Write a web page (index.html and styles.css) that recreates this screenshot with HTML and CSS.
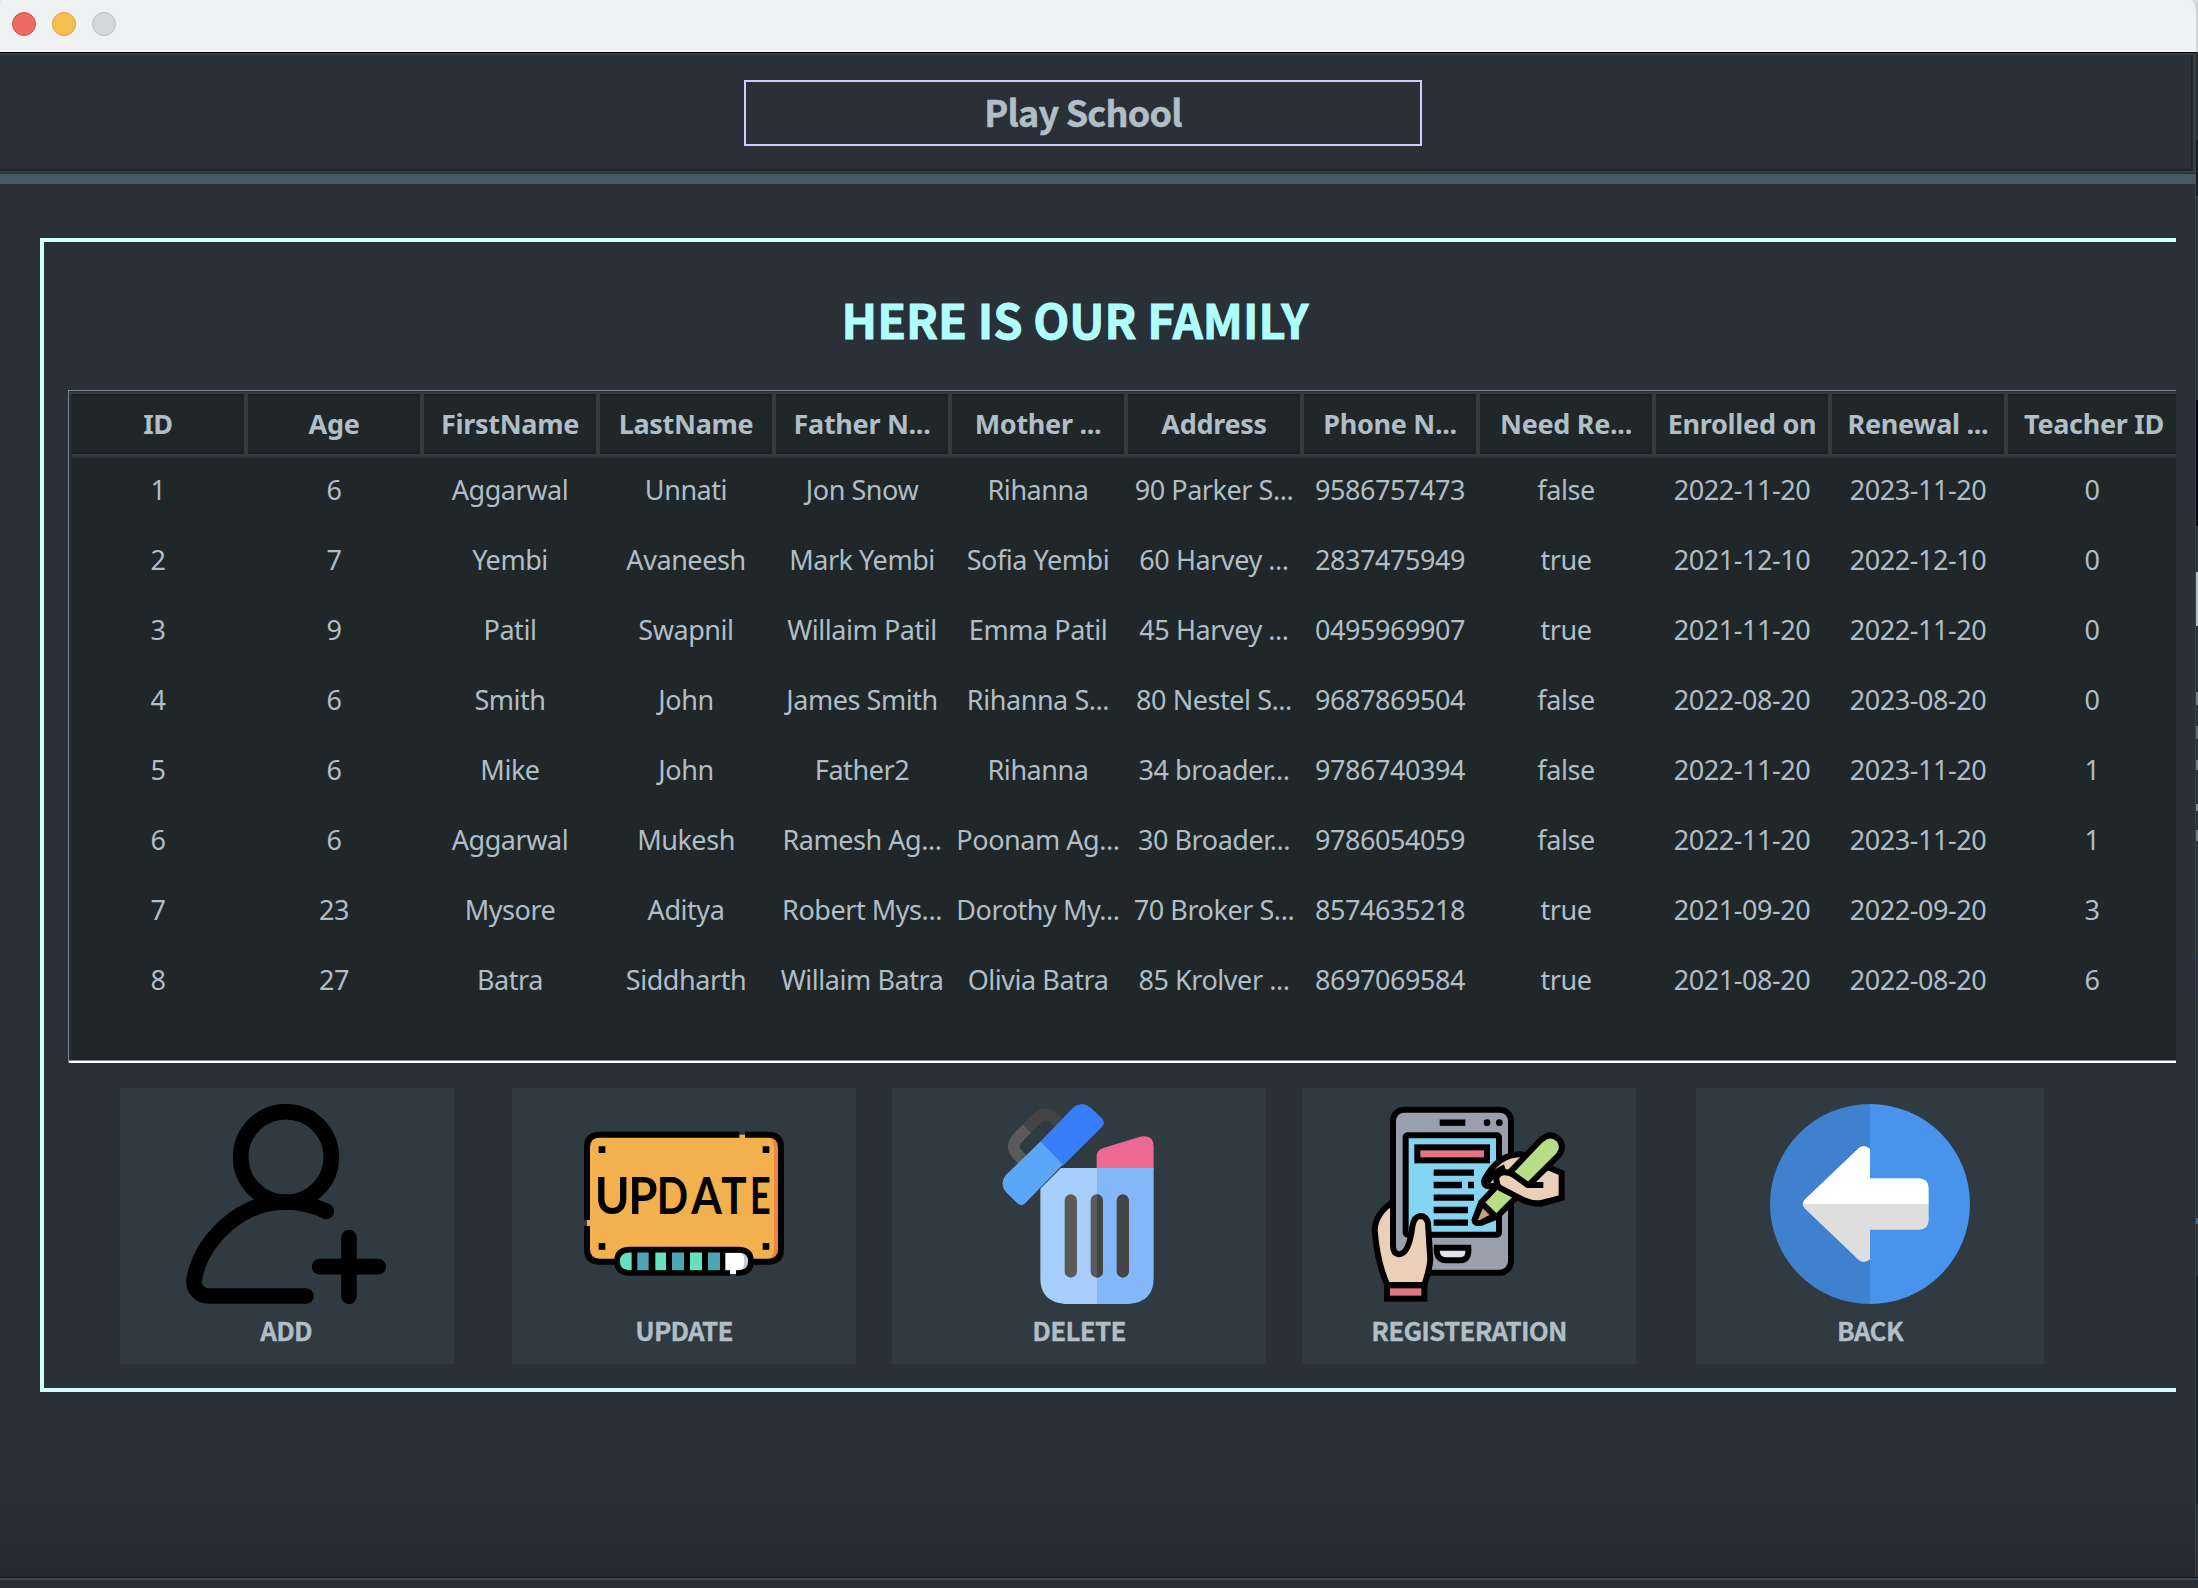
FILE: index.html
```
<!DOCTYPE html>
<html lang="en">
<head>
<meta charset="utf-8">
<title>Play School</title>
<link rel="stylesheet" href="styles.css">
</head>
<body>
<div class="desktop">
  <div class="window">
    <div class="titlebar">
      <span class="light close"></span><span class="light minimize"></span><span class="light zoom"></span>
    </div>
    <header class="header"><div class="brand">Play School</div></header>
    <div class="divider"></div>
    <main class="content">
      <section class="panel">
        <h1 class="heading">HERE IS OUR FAMILY</h1>
        <div class="table-box">
          <div class="table">
            <div class="row head"><span>ID</span><span>Age</span><span>FirstName</span><span>LastName</span><span>Father N...</span><span>Mother ...</span><span>Address</span><span>Phone N...</span><span>Need Re...</span><span>Enrolled on</span><span>Renewal ...</span><span>Teacher ID</span></div>
            <div class="rule"></div>
            <div class="row"><span>1</span><span>6</span><span>Aggarwal</span><span>Unnati</span><span>Jon Snow</span><span>Rihanna</span><span>90 Parker S...</span><span>9586757473</span><span>false</span><span>2022-11-20</span><span>2023-11-20</span><span>0</span></div>
            <div class="row"><span>2</span><span>7</span><span>Yembi</span><span>Avaneesh</span><span>Mark Yembi</span><span>Sofia Yembi</span><span>60 Harvey ...</span><span>2837475949</span><span>true</span><span>2021-12-10</span><span>2022-12-10</span><span>0</span></div>
            <div class="row"><span>3</span><span>9</span><span>Patil</span><span>Swapnil</span><span>Willaim Patil</span><span>Emma Patil</span><span>45 Harvey ...</span><span>0495969907</span><span>true</span><span>2021-11-20</span><span>2022-11-20</span><span>0</span></div>
            <div class="row"><span>4</span><span>6</span><span>Smith</span><span>John</span><span>James Smith</span><span>Rihanna S...</span><span>80 Nestel S...</span><span>9687869504</span><span>false</span><span>2022-08-20</span><span>2023-08-20</span><span>0</span></div>
            <div class="row"><span>5</span><span>6</span><span>Mike</span><span>John</span><span>Father2</span><span>Rihanna</span><span>34 broader...</span><span>9786740394</span><span>false</span><span>2022-11-20</span><span>2023-11-20</span><span>1</span></div>
            <div class="row"><span>6</span><span>6</span><span>Aggarwal</span><span>Mukesh</span><span>Ramesh Ag...</span><span>Poonam Ag...</span><span>30 Broader...</span><span>9786054059</span><span>false</span><span>2022-11-20</span><span>2023-11-20</span><span>1</span></div>
            <div class="row"><span>7</span><span>23</span><span>Mysore</span><span>Aditya</span><span>Robert Mys...</span><span>Dorothy My...</span><span>70 Broker S...</span><span>8574635218</span><span>true</span><span>2021-09-20</span><span>2022-09-20</span><span>3</span></div>
            <div class="row"><span>8</span><span>27</span><span>Batra</span><span>Siddharth</span><span>Willaim Batra</span><span>Olivia Batra</span><span>85 Krolver ...</span><span>8697069584</span><span>true</span><span>2021-08-20</span><span>2022-08-20</span><span>6</span></div>
          </div>
        </div>
        <div class="actions">
          <div class="card add">
            <svg class="icon" viewBox="258 102 600 600" fill="none" stroke="#000" stroke-width="47" stroke-linecap="round" stroke-linejoin="round">
              <circle cx="558" cy="261" r="136"/>
              <path d="M679 424C640 405 600 396 555 396C425 396 305 505 282 630C279 656 300 678 325 678H618M747 503V679M659 590H835"/>
            </svg>
            <span>ADD</span>
          </div>
          <div class="card update">
            <svg class="icon" viewBox="252 102 600 600">
              <rect x="261" y="194" width="582" height="381" rx="38" fill="#f2b04f"/>
              <path d="M808 200Q836 210 836 235V535Q836 560 808 572Q822 555 822 535V235Q822 210 808 200Z" fill="#ee8441"/>
              <path d="M718 194H299Q261 194 261 232V450M261 468V537Q261 575 299 575H805Q843 575 843 537V232Q843 194 805 194H735" fill="none" stroke="#000" stroke-width="18"/>
              <path d="M296 229h20v20h-20zM788 229h20v20h-20zM296 519h20v20h-20zM788 519h20v20h-20z"/>
              <g class="icon-text">
                <text x="284" y="433" textLength="105" lengthAdjust="spacingAndGlyphs">U</text>
                <text x="385" y="433" textLength="88" lengthAdjust="spacingAndGlyphs">P</text>
                <text x="470" y="433" textLength="94" lengthAdjust="spacingAndGlyphs">D</text>
                <text x="574" y="433" textLength="92" lengthAdjust="spacingAndGlyphs">A</text>
                <text x="664" y="433" textLength="76" lengthAdjust="spacingAndGlyphs">T</text>
                <text x="750" y="433" textLength="62" lengthAdjust="spacingAndGlyphs">E</text>
              </g>
              <rect x="351" y="539" width="402" height="70" rx="35" fill="#000"/>
              <path d="M395 546V602H386Q357 600 357 574T386 546Z M466 546h32v56h-32z M570 546h36v56h-36z" fill="#66e0bd"/>
              <path d="M412 546h34v56h-34z M516 546h36v56h-36z M624 546h36v56h-36z" fill="#4ba5b3"/>
              <path d="M676 548H718Q747 550 747 574T718 602H708V612H690V602H676Z" fill="#fff"/>
              <path d="M725 548Q748 555 748 574T725 602Q733 590 733 574T725 548Z" fill="#bdced9"/>
              <path d="M690 609H386Q351 607 351 574T386 539H718Q753 541 753 574T718 609H708" fill="none" stroke="#000" stroke-width="17"/>
            </svg>
            <span>UPDATE</span>
          </div>
          <div class="card delete">
            <svg class="icon" viewBox="297 102 600 600">
              <path d="M428 270L412 253Q390 229 412 205L441 176" fill="none" stroke="#5a5a5a" stroke-width="35"/>
              <path d="M441 176L468 149Q493 123 519 142L535 156" fill="none" stroke="#444" stroke-width="35"/>
              <path d="M650 300V260Q650 240 670 234L780 200Q821 192 821 230V300Z" fill="#ed6892"/>
              <path d="M481 294H651V702H555Q481 696 481 625Z" fill="#a7cdfa"/>
              <path d="M651 294H821V625Q821 696 747 702H651Z" fill="#84b6fa"/>
              <path d="M481 356L547 290H470V356Z" fill="#303b41"/>
              <path d="M482 214L579 113Q605 91 632 113L665 144Q678 158 665 172L548 288Z" fill="#377df7"/>
              <path d="M482 214L548 284L436 399Q425 412 411 399L377 365Q358 340 377 316Z" fill="#5ba6f7"/>
              <rect x="554" y="373" width="37" height="250" rx="18.5" fill="#5a5a5a"/>
              <rect x="632" y="373" width="37" height="250" rx="18.5" fill="#5a5a5a"/>
              <path d="M651 373A18.5 18.5 0 0 1 669 391.500V604.500A18.500 18.500 0 0 1 651 623Z" fill="#444"/>
              <rect x="710" y="373" width="37" height="250" rx="18.5" fill="#444"/>
            </svg>
            <span>DELETE</span>
          </div>
          <div class="card registration">
            <svg class="icon" viewBox="237 102 600 600" stroke="#000" stroke-width="18">
              <rect x="309" y="119" width="354" height="489" rx="34" fill="#9aa0ab"/>
              <path d="M449 158H526" stroke-width="19"/>
              <g stroke="none" fill="#000"><circle cx="591" cy="158" r="10"/><circle cx="628" cy="158" r="10"/></g>
              <rect x="347" y="196" width="280" height="298" rx="6" fill="#85d4f1"/>
              <rect x="382" y="232" width="209" height="39" fill="#df7681"/>
              <path d="M431 308H552M431 345H516M534 345H552M431 383H552M431 420H534M431 458H534" stroke-width="19"/>
              <path d="M440 533H535Q538 570 512 571H468Q438 570 440 533Z" fill="#e1e5e8"/>
              <path d="M309 395Q256 430 254 480Q262 580 292 645H403Q418 600 421 570L414 460Q410 438 390 438Q372 440 367 470Q357 553 326 553Q309 550 309 528Z" fill="#ead0b7"/>
              <rect x="291" y="646" width="112" height="40" fill="#df7681"/>
              <path d="M601 349Q579 350 583 330Q625 250 695 253L720 262L705 300L640 345Z" fill="#ead0b7"/>
              <path d="M695 330L775 292L815 309V383L755 401Q730 404 700 391L660 360Z" fill="#ead0b7"/>
              <path d="M554 450L573 398L752 210Q780 183 807 208Q826 232 805 257L621 440L574 458Q555 462 554 450Z" fill="#b9dc86" stroke-linejoin="round"/>
              <path d="M554 450L575 399L614 437L574 458Q555 462 554 450Z" fill="#c79f7a" stroke-linejoin="round"/>
              <path d="M709 345L675 318Q635 296 621 320Q616 343 631 354L702 391Q732 404 757 398L785 385L760 345Z" fill="#ead0b7" stroke="none"/>
              <path d="M760 345H713L672 315Q635 296 620 320Q616 343 630 354L702 391Q732 404 757 398L820 383M592 338Q610 305 645 292" fill="none"/>
            </svg>
            <span>REGISTERATION</span>
          </div>
          <div class="card back">
            <svg class="icon" viewBox="270 102 600 600">
              <path d="M570 102A300 300 0 0 0 570 702Z" fill="#3f81cf"/>
              <path d="M570 102A300 300 0 0 1 570 702Z" fill="#4894ed"/>
              <path d="M368 402Q368 394 375 388L537 233Q553 221 570 236V325H718Q746 327 746 355V402Z" fill="#fff"/>
              <path d="M368 402Q368 410 375 416L537 571Q553 583 570 568V479H718Q746 477 746 449V402Z" fill="#dedede"/>
            </svg>
            <span>BACK</span>
          </div>
        </div>
      </section>
    </main>
    <div class="dock-edge"></div>
  </div>
  <div class="backdrop"></div>
</div>
</body>
</html>
```
FILE: styles.css
```
* { box-sizing: border-box; }
body { margin: 0; background: #293037; color: #b0bec5; font-family: "Noto Sans", sans-serif; }
.desktop { display: flex; width: 2198px; height: 1588px; overflow: hidden; background: linear-gradient(#d8d9dc 52px, #293037 52px); }
.window { flex: 1; display: flex; flex-direction: column; min-width: 0; }
.backdrop {
  width: 2px;
  background: linear-gradient(#d3d4d7 0 52px, #2f2f2f 52px 140px, #191b1c 140px 196px, #444 196px 198px, #2d2d2d 198px 400px, #030914 400px 526px, #2d2d2d 526px 572px, #b9babb 572px 626px, #303030 626px 692px, #777 692px 705px, #303030 705px 726px, #666 726px 739px, #303030 739px 760px, #777 760px 770px, #303030 770px 804px, #888 804px 811px, #303030 811px 830px, #777 830px 841px, #303030 841px 956px, #282e3b 956px 994px, #2d2d2d 994px 1218px, #45659c 1218px 1224px, #2d2d2d 1224px 1276px, #1d1e1f 1276px 1504px, #2e2f30 1504px 1577px, #111 1577px 1578px, #40484f 1578px 1580px, #282f38 1580px);
}

.titlebar { display: flex; align-items: center; gap: 16px; height: 53px; padding: 0 12px 4px; background: #eff1f3; border-bottom: 1px solid #000; border-radius: 2px 6px 0 0 / 3px 15px 0 0; }
.light { width: 24px; height: 24px; border-radius: 50%; border: 1px solid; }
.close { background: #ed6b60; border-color: #d35549; }
.minimize { background: #f5be50; border-color: #d9a23a; }
.zoom { background: #d6d7d8; border-color: #bbbcbd; }

.header { display: flex; height: 120px; padding: 25px 0 0 744px; border: solid #333f48; border-width: 2px 3px 2px 0; box-shadow: inset -2px -2px #1f252b; }
.brand { width: 678px; height: 66px; border: 2px solid #ccccff; text-align: center; font: bold 36px/58px "Noto Sans CJK SC", sans-serif; letter-spacing: -.8px; -webkit-text-stroke: .5px; }
.divider { height: 11px; background: #455a64; border-top: 1px solid #293037; }

.content { height: 1393px; padding: 54px 19px 0 40px; border-right: 1px solid #3b454d; background: linear-gradient(#293037 1310px, #23292f); }
.panel { height: 1154px; border: 4px solid #d4fdff; border-right: 0; }
.heading { margin: 0; height: 148px; padding: 4px 70px 0 0; text-align: center; color: #b0ffff; font: bold 47px/145px "Noto Sans CJK SC", sans-serif; letter-spacing: 0; -webkit-text-stroke: .9px; }

.table-box { margin-left: 24px; height: 673px; border-top: 1px solid #7a8896; border-left: 1px solid #7a8896; border-bottom: 2px solid #fff; border-bottom-left-radius: 2px; background: #1f2729; }
.table { height: 670px; padding: 3px 0 0 3px; border-bottom: 1px solid #7a8896; overflow: hidden; background: linear-gradient(#2b3337 1px, #37393b 1px 3px, transparent 3px), linear-gradient(90deg, #242d33 3px, transparent 3px); }
.row { display: grid; grid-template-columns: repeat(12, 176px); height: 70px; font-size: 27px; line-height: 72px; letter-spacing: -.45px; white-space: nowrap; }
.row span { width: 172px; text-align: center; }
.row:not(.head) span:last-child { width: 168px; }
.row.head { height: 60px; font-weight: bold; line-height: 60px; letter-spacing: -.3px; }
.row.head span { width: 176px; border-right: 4px solid #37393b; box-shadow: inset 0 4px #1c2327, inset 0 -4px #1c2327; }
.rule { height: 4px; margin-bottom: -4px; background: linear-gradient(#37393b 2px, #2b343d 2px); }

.actions { display: flex; padding: 25px 0 0 76px; }
.card { display: flex; flex-direction: column; align-items: center; height: 276px; padding-top: 16px; background: #303b41; font: bold 26px/51px "Noto Sans CJK SC", sans-serif; letter-spacing: -.74px; -webkit-text-stroke: .3px; }
.icon { width: 200px; height: 200px; flex: none; }
.icon-text { font: bold 153px Lato, sans-serif; fill: #000; letter-spacing: 0; -webkit-text-stroke: 0; }
.add { width: 334px; padding-right: 2px; }
.update { width: 344px; margin-left: 58px; }
.delete { width: 374px; margin-left: 36px; }
.registration { width: 334px; margin-left: 36px; }
.back { width: 348px; margin-left: 60px; }

.dock-edge { height: 11px; background: linear-gradient(#111416 1px, #40484f 1px 3px, #282f38 3px); }
```
